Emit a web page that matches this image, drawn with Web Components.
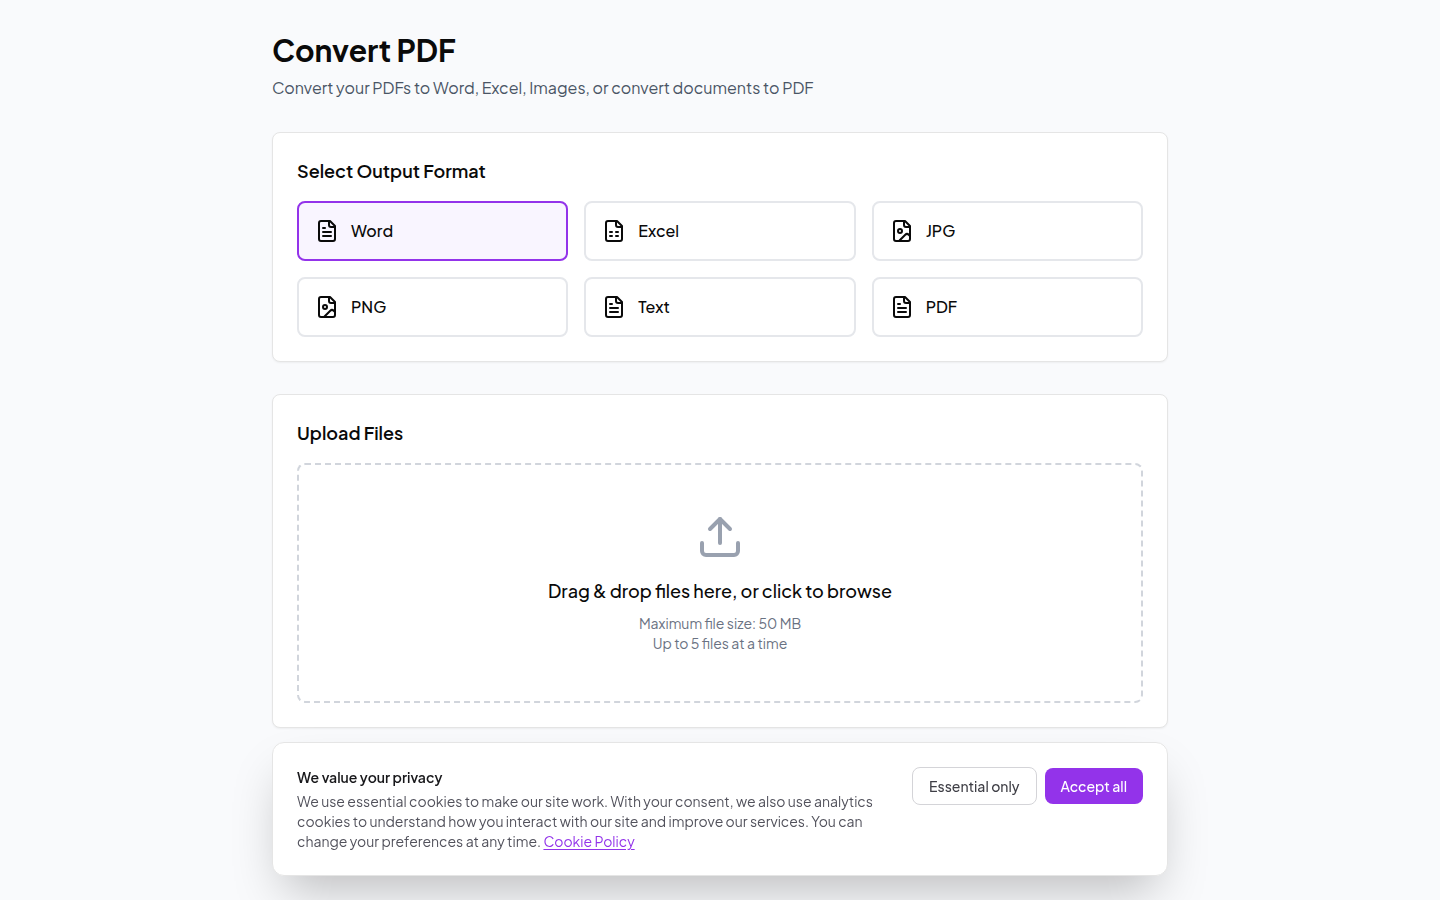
<!DOCTYPE html>
<html lang="en">
<head>
<meta charset="utf-8">
<meta name="viewport" content="width=device-width, initial-scale=1">
<title>Convert PDF</title>
<style>
  body {
    margin: 0;
    min-height: 100vh;
    background: #f9fafc;
    color: #0a0a0a;
    font: 16px/24px "Plus Jakarta Sans", Inter, sans-serif;
    -webkit-font-smoothing: antialiased;
  }
</style>
</head>
<body>
<convert-page>
  <page-header slot="header">
    Convert PDF
    <span slot="subtitle">Convert your PDFs to Word, Excel, Images, or convert documents to PDF</span>
  </page-header>
  <section-card heading="Select Output Format">
    <format-picker>
      <format-option icon="text" selected>Word</format-option>
      <format-option icon="sheet">Excel</format-option>
      <format-option icon="image">JPG</format-option>
      <format-option icon="image">PNG</format-option>
      <format-option icon="text">Text</format-option>
      <format-option icon="text">PDF</format-option>
    </format-picker>
  </section-card>
  <section-card heading="Upload Files">
    <drop-zone>
      Drag &amp; drop files here, or click to browse
      <div slot="hint">Maximum file size: 50 MB</div>
      <div slot="hint">Up to 5 files at a time</div>
    </drop-zone>
  </section-card>
</convert-page>
<cookie-banner></cookie-banner>

<script>
const icons = {
  text: `<path d="M15 2H6a2 2 0 0 0-2 2v16a2 2 0 0 0 2 2h12a2 2 0 0 0 2-2V7Z"/><path d="M14 2v4a2 2 0 0 0 2 2h4"/><path d="M10 9H8"/><path d="M16 13H8"/><path d="M16 17H8"/>`,
  sheet: `<path d="M15 2H6a2 2 0 0 0-2 2v16a2 2 0 0 0 2 2h12a2 2 0 0 0 2-2V7Z"/><path d="M14 2v4a2 2 0 0 0 2 2h4"/><path d="M8 13h2"/><path d="M14 13h2"/><path d="M8 17h2"/><path d="M14 17h2"/>`,
  image: `<path d="M15 2H6a2 2 0 0 0-2 2v16a2 2 0 0 0 2 2h12a2 2 0 0 0 2-2V7Z"/><path d="M14 2v4a2 2 0 0 0 2 2h4"/><circle cx="10" cy="12" r="2"/><path d="m20 17-1.296-1.296a2.41 2.41 0 0 0-3.408 0L9 22"/>`,
  upload: `<path d="M12 3v12"/><path d="m17 8-5-5-5 5"/><path d="M21 15v4a2 2 0 0 1-2 2H5a2 2 0 0 1-2-2v-4"/>`,
};

const render = (host, html) => {
  const shadow = host.attachShadow({ mode: "open" });
  const template = document.createElement("template");
  template.innerHTML = html;
  shadow.appendChild(template.content.cloneNode(true));
  return shadow;
};

class UiIcon extends HTMLElement {
  constructor() {
    super();
    this.shadow = render(this, `
      <style>
        :host { display: block; flex: none; width: 24px; height: 24px; }
        svg { display: block; width: 100%; height: 100%; }
      </style>
      <svg viewBox="0 0 24 24" fill="none" stroke="currentColor" stroke-width="2" stroke-linecap="round" stroke-linejoin="round" aria-hidden="true"></svg>
    `);
  }
  static get observedAttributes() {
    return ["name"];
  }
  attributeChangedCallback(attr, _, value) {
    this.shadow.querySelector("svg").innerHTML = icons[value] || "";
  }
}

class ConvertPage extends HTMLElement {
  constructor() {
    super();
    render(this, `
      <style>
        :host { display: block; }
        main {
          display: flex;
          flex-direction: column;
          gap: 32px;
          box-sizing: border-box;
          max-width: 928px;
          margin: 0 auto;
          padding: 32px 16px;
        }
      </style>
      <main>
        <slot name="header"></slot>
        <slot></slot>
      </main>
    `);
  }
}

class PageHeader extends HTMLElement {
  constructor() {
    super();
    render(this, `
      <style>
        :host { display: block; }
        h1 { margin: 0 0 8px; font-size: 30px; line-height: 36px; font-weight: 700; }
        p { margin: 0; color: #4a5565; }
      </style>
      <h1><slot></slot></h1>
      <p><slot name="subtitle"></slot></p>
    `);
  }
}

class SectionCard extends HTMLElement {
  constructor() {
    super();
    const shadow = render(this, `
      <style>
        :host {
          display: block;
          padding: 24px;
          background: #fff;
          border: 1px solid #e5e5e5;
          border-radius: 8px;
          box-shadow: 0 1px 2px rgba(0, 0, 0, 0.05);
        }
        h2 { margin: 0 0 16px; font-size: 18px; line-height: 28px; font-weight: 600; }
      </style>
      <h2></h2>
      <slot></slot>
    `);
    shadow.querySelector("h2").textContent = this.getAttribute("heading");
  }
}

class FormatPicker extends HTMLElement {
  constructor() {
    super();
    render(this, `
      <style>
        :host {
          display: grid;
          grid-template-columns: repeat(3, 1fr);
          gap: 16px;
        }
        @media (max-width: 640px) {
          :host { grid-template-columns: repeat(2, 1fr); }
        }
      </style>
      <slot></slot>
    `);
    this.addEventListener("click", (e) => {
      const option = e.target.closest("format-option");
      if (!option) return;
      for (const item of this.querySelectorAll("format-option")) {
        item.toggleAttribute("selected", item === option);
      }
    });
  }
}

class FormatOption extends HTMLElement {
  constructor() {
    super();
    this.shadow = render(this, `
      <style>
        :host { display: block; }
        button {
          display: flex;
          align-items: center;
          gap: 12px;
          width: 100%;
          padding: 16px;
          background: transparent;
          border: 2px solid #e5e7eb;
          border-radius: 8px;
          color: inherit;
          font: inherit;
          font-weight: 500;
          cursor: pointer;
        }
        :host([selected]) button { background: #f9f5ff; border-color: #9333ea; }
      </style>
      <button type="button">
        <ui-icon name="${this.getAttribute("icon")}"></ui-icon>
        <span><slot></slot></span>
      </button>
    `);
  }
  static get observedAttributes() {
    return ["selected"];
  }
  connectedCallback() {
    this.sync();
  }
  attributeChangedCallback() {
    this.sync();
  }
  sync() {
    this.shadow.querySelector("button").setAttribute("aria-pressed", this.hasAttribute("selected"));
  }
}

class DropZone extends HTMLElement {
  constructor() {
    super();
    render(this, `
      <style>
        :host { display: block; }
        label {
          display: flex;
          flex-direction: column;
          align-items: center;
          padding: 48px;
          border: 2px dashed #d1d5dc;
          border-radius: 8px;
          text-align: center;
          cursor: pointer;
        }
        input { display: none; }
        ui-icon { width: 48px; height: 48px; margin-bottom: 16px; color: #99a1af; }
        .title { margin-bottom: 8px; font-size: 18px; line-height: 28px; font-weight: 500; }
        .hint { font-size: 14px; line-height: 20px; color: #6a7282; }
      </style>
      <label for="files">
        <ui-icon name="upload"></ui-icon>
        <span class="title"><slot></slot></span>
        <span class="hint"><slot name="hint"></slot></span>
      </label>
      <input id="files" type="file" multiple>
    `);
  }
}

class CookieBanner extends HTMLElement {
  constructor() {
    super();
    const shadow = render(this, `
      <style>
        :host {
          position: fixed;
          inset: auto 0 0;
          display: block;
          padding: 24px;
          font-size: 14px;
          line-height: 20px;
        }
        .panel {
          display: flex;
          align-items: flex-start;
          justify-content: space-between;
          gap: 24px;
          box-sizing: border-box;
          max-width: 896px;
          margin: 0 auto;
          padding: 24px;
          background: #fff;
          border: 1px solid #e5e5e5;
          border-radius: 12px;
          box-shadow: 0 25px 50px -12px rgba(0, 0, 0, 0.25);
        }
        h3 { margin: 0 0 4px; color: #18181b; font-size: 14px; line-height: 20px; font-weight: 600; }
        p { margin: 0; color: #52525c; }
        a { color: #9333ea; text-decoration: underline; text-underline-offset: 2px; }
        .actions { display: flex; flex: none; align-items: center; gap: 8px; }
        button {
          padding: 8px 16px;
          border: 0;
          border-radius: 8px;
          background: #9333ea;
          color: #fff;
          font: inherit;
          font-weight: 500;
          cursor: pointer;
        }
        .outline { background: #fff; border: 1px solid #d4d4d8; color: #3f3f46; }
      </style>
      <section class="panel" aria-labelledby="title">
        <div>
          <h3 id="title">We value your privacy</h3>
          <p>We use essential cookies to make our site work. With your consent, we also use analytics cookies to understand how you interact with our site and improve our services. You can change your preferences at any time. <a href="#cookies">Cookie Policy</a></p>
        </div>
        <div class="actions">
          <button class="outline" type="button">Essential only</button>
          <button type="button">Accept all</button>
        </div>
      </section>
    `);
    for (const button of shadow.querySelectorAll("button")) {
      button.addEventListener("click", () => this.remove());
    }
  }
}

customElements.define("ui-icon", UiIcon);
customElements.define("convert-page", ConvertPage);
customElements.define("page-header", PageHeader);
customElements.define("section-card", SectionCard);
customElements.define("format-picker", FormatPicker);
customElements.define("format-option", FormatOption);
customElements.define("drop-zone", DropZone);
customElements.define("cookie-banner", CookieBanner);
</script>
</body>
</html>
